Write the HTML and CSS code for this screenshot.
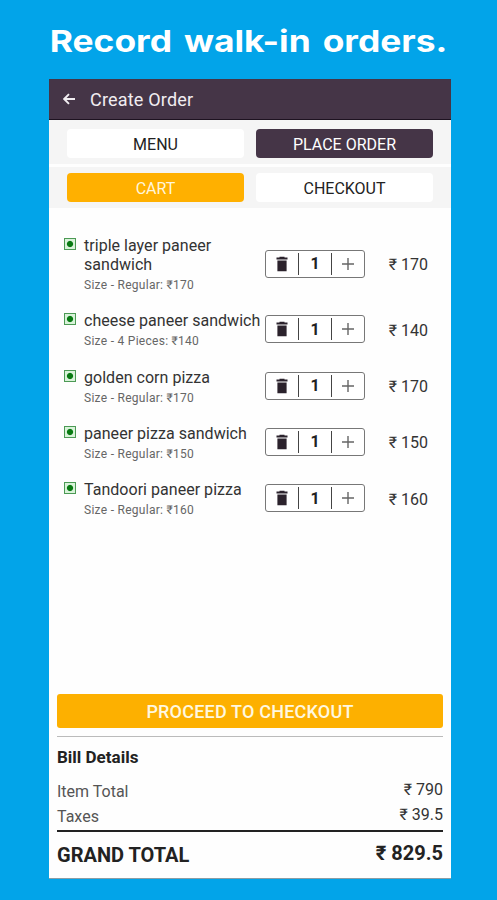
FILE: index.html
```html
<!DOCTYPE html>
<html lang="en">
<head>
  <meta charset="UTF-8">
  <title>Create Order</title>
  <meta name="viewport" content="width=device-width, initial-scale=1.0">
  <link rel="stylesheet" href="styles.css">
</head>
<body>
  <!-- shared icons -->
  <svg class="sprite">
    <symbol id="trash" viewBox="0 0 12 16">
      <path d="M3.5 0.8h5v0.8h3v1.8H0.5V1.6h3zM1.4 4.6h9.2V15.2H1.4z"/>
    </symbol>
    <symbol id="plus" viewBox="0 0 12 12">
      <path d="M6 0v12M0 6h12" fill="none" stroke="#666" stroke-width="1.4"/>
    </symbol>
  </svg>

  <h1 class="headline"><span>Record walk-in orders.</span></h1>

  <div class="phone">
    <header class="app-bar">
      <svg class="back" viewBox="0 0 12 12"><path d="M12 6H1.5M6 1.2L1.2 6 6 10.8"/></svg>
      <span class="app-title">Create Order</span>
    </header>

    <nav class="tabs">
      <a class="tab">MENU</a>
      <a class="tab tab-dark">PLACE ORDER</a>
    </nav>
    <nav class="tabs tabs-second">
      <a class="tab tab-orange">CART</a>
      <a class="tab">CHECKOUT</a>
    </nav>

    <ul class="cart">
      <li class="item">
        <i class="veg"></i>
        <div class="info"><div class="name">triple layer paneer<br>sandwich</div><div class="size">Size - Regular: ₹170</div></div>
        <div class="stepper"><span><svg class="trash"><use href="#trash"/></svg></span><b>1</b><span><svg class="plus"><use href="#plus"/></svg></span></div>
        <div class="price">₹ 170</div>
      </li>
      <li class="item">
        <i class="veg"></i>
        <div class="info"><div class="name">cheese paneer sandwich</div><div class="size">Size - 4 Pieces: ₹140</div></div>
        <div class="stepper"><span><svg class="trash"><use href="#trash"/></svg></span><b>1</b><span><svg class="plus"><use href="#plus"/></svg></span></div>
        <div class="price">₹ 140</div>
      </li>
      <li class="item">
        <i class="veg"></i>
        <div class="info"><div class="name">golden corn pizza</div><div class="size">Size - Regular: ₹170</div></div>
        <div class="stepper"><span><svg class="trash"><use href="#trash"/></svg></span><b>1</b><span><svg class="plus"><use href="#plus"/></svg></span></div>
        <div class="price">₹ 170</div>
      </li>
      <li class="item">
        <i class="veg"></i>
        <div class="info"><div class="name">paneer pizza sandwich</div><div class="size">Size - Regular: ₹150</div></div>
        <div class="stepper"><span><svg class="trash"><use href="#trash"/></svg></span><b>1</b><span><svg class="plus"><use href="#plus"/></svg></span></div>
        <div class="price">₹ 150</div>
      </li>
      <li class="item">
        <i class="veg"></i>
        <div class="info"><div class="name">Tandoori paneer pizza</div><div class="size">Size - Regular: ₹160</div></div>
        <div class="stepper"><span><svg class="trash"><use href="#trash"/></svg></span><b>1</b><span><svg class="plus"><use href="#plus"/></svg></span></div>
        <div class="price">₹ 160</div>
      </li>
    </ul>

    <footer class="bill">
      <button class="checkout">PROCEED TO CHECKOUT</button>
      <h2 class="bill-title">Bill Details</h2>
      <div class="bill-row"><span>Item Total</span><span class="amount">₹ 790</span></div>
      <div class="bill-row"><span>Taxes</span><span class="amount">₹ 39.5</span></div>
      <div class="grand"><span>GRAND TOTAL</span><span class="amount">₹ 829.5</span></div>
    </footer>
  </div>
</body>
</html>
```
FILE: styles.css
```css
* { box-sizing: border-box; }
body {
  margin: 0;
  height: 900px;
  overflow: hidden;
  background: #02a4e9;
  font-family: Roboto, "Noto Sans", sans-serif;
  color: #222;
}
.sprite {
  display: none;
}
.headline {
  margin: 0;
  height: 79px;
  padding-top: 22px;
  text-align: center;
  font-family: Inter, sans-serif;
  font-size: 30px;
  line-height: 39px;
  font-weight: 700;
  word-spacing: 3px;
  color: #fff;
  white-space: nowrap;
}
.headline span {
  display: inline-block;
  transform: scaleX(1.18);
}
.phone {
  display: flex;
  flex-direction: column;
  width: 402px;
  height: 800px;
  margin: 0 auto 0 49px;
  background: #fefefe;
  border-bottom: 1px solid #8a9da5;
}
.app-bar {
  display: flex;
  align-items: center;
  height: 41px;
  padding-left: 14px;
  background: #453547;
  border-bottom: 1px solid #1d1220;
  color: #f1edf1;
}
.back {
  width: 12px;
  height: 12px;
  margin-right: 15px;
  fill: none;
  stroke: #f1edf1;
  stroke-width: 1.9;
}
.app-title {
  font-size: 18px;
  letter-spacing: 0.2px;
}
.tabs {
  display: grid;
  grid-template-columns: 177px 177px;
  gap: 12px;
  justify-content: center;
  align-items: center;
  height: 44px;
  padding-top: 2px;
  background: #f5f5f5;
}
.tabs-second {
  height: 41px;
  margin-top: 3px;
  padding-top: 0;
}
.tab {
  height: 29px;
  border-radius: 4px;
  background: #fff;
  text-align: center;
  font-size: 16px;
  line-height: 31px;
}
.tab-dark {
  background: #453547;
  color: #fff;
}
.tab-orange {
  background: #ffb000;
  color: #fff6dc;
}
.cart {
  display: flex;
  flex-direction: column;
  gap: 18.3px;
  margin: 28px 0 0;
  padding: 0 23px 0 15px;
  list-style: none;
}
.item {
  display: flex;
  align-items: center;
}
.veg {
  align-self: flex-start;
  width: 12px;
  height: 12px;
  margin: 2px 8px 0 0;
  border: 1px solid #4c9a55;
  background: radial-gradient(circle, #087a12 0 2.6px, #d9f3da 3.6px);
}
.info {
  width: 181px;
}
.name {
  font-size: 16px;
  line-height: 19px;
  letter-spacing: 0.03px;
  color: #333;
  white-space: nowrap;
}
.size {
  margin-top: 4px;
  font-size: 12px;
  line-height: 15px;
  letter-spacing: 0.28px;
  color: #666;
}
.stepper {
  display: flex;
  align-items: center;
  width: 100px;
  height: 28px;
  margin-bottom: 2px;
  border: 1px solid #777;
  border-radius: 3px;
  background: #fff;
}
.stepper > * {
  display: flex;
  flex: 1;
  align-items: center;
  justify-content: center;
  height: 22px;
  font-size: 16px;
}
.stepper b {
  border: solid #444;
  border-width: 0 1px;
}
.trash {
  width: 12px;
  height: 16px;
  fill: #2b222c;
}
.plus {
  width: 12px;
  height: 12px;
}
.price {
  flex: 1;
  text-align: right;
  font-size: 16px;
  color: #333;
}
.bill {
  margin-top: auto;
  padding: 0 8px 9px;
}
.checkout {
  display: block;
  width: 100%;
  height: 34px;
  padding: 0;
  border: 0;
  border-radius: 3px;
  background: #fdb000;
  color: #fff8e0;
  font: 500 18px/36px Roboto, sans-serif;
  letter-spacing: 0.2px;
}
.bill-title {
  margin: 8px 0 0;
  padding-top: 9px;
  border-top: 1px solid #bbb;
  font-size: 17px;
  line-height: 22px;
  font-weight: 700;
}
.bill-row {
  display: flex;
  justify-content: space-between;
  margin-top: 11px;
  font-size: 16px;
  line-height: 25px;
  color: #555;
}
.bill-row + .bill-row {
  margin-top: 0;
}
.bill-row .amount {
  position: relative;
  top: -2px;
  color: #333;
}
.grand {
  display: flex;
  justify-content: space-between;
  margin-top: 1px;
  padding-top: 9px;
  border-top: 2px solid #222;
  font-size: 20px;
  line-height: 28px;
  font-weight: 700;
}
.grand .amount {
  position: relative;
  top: -2px;
}
```
